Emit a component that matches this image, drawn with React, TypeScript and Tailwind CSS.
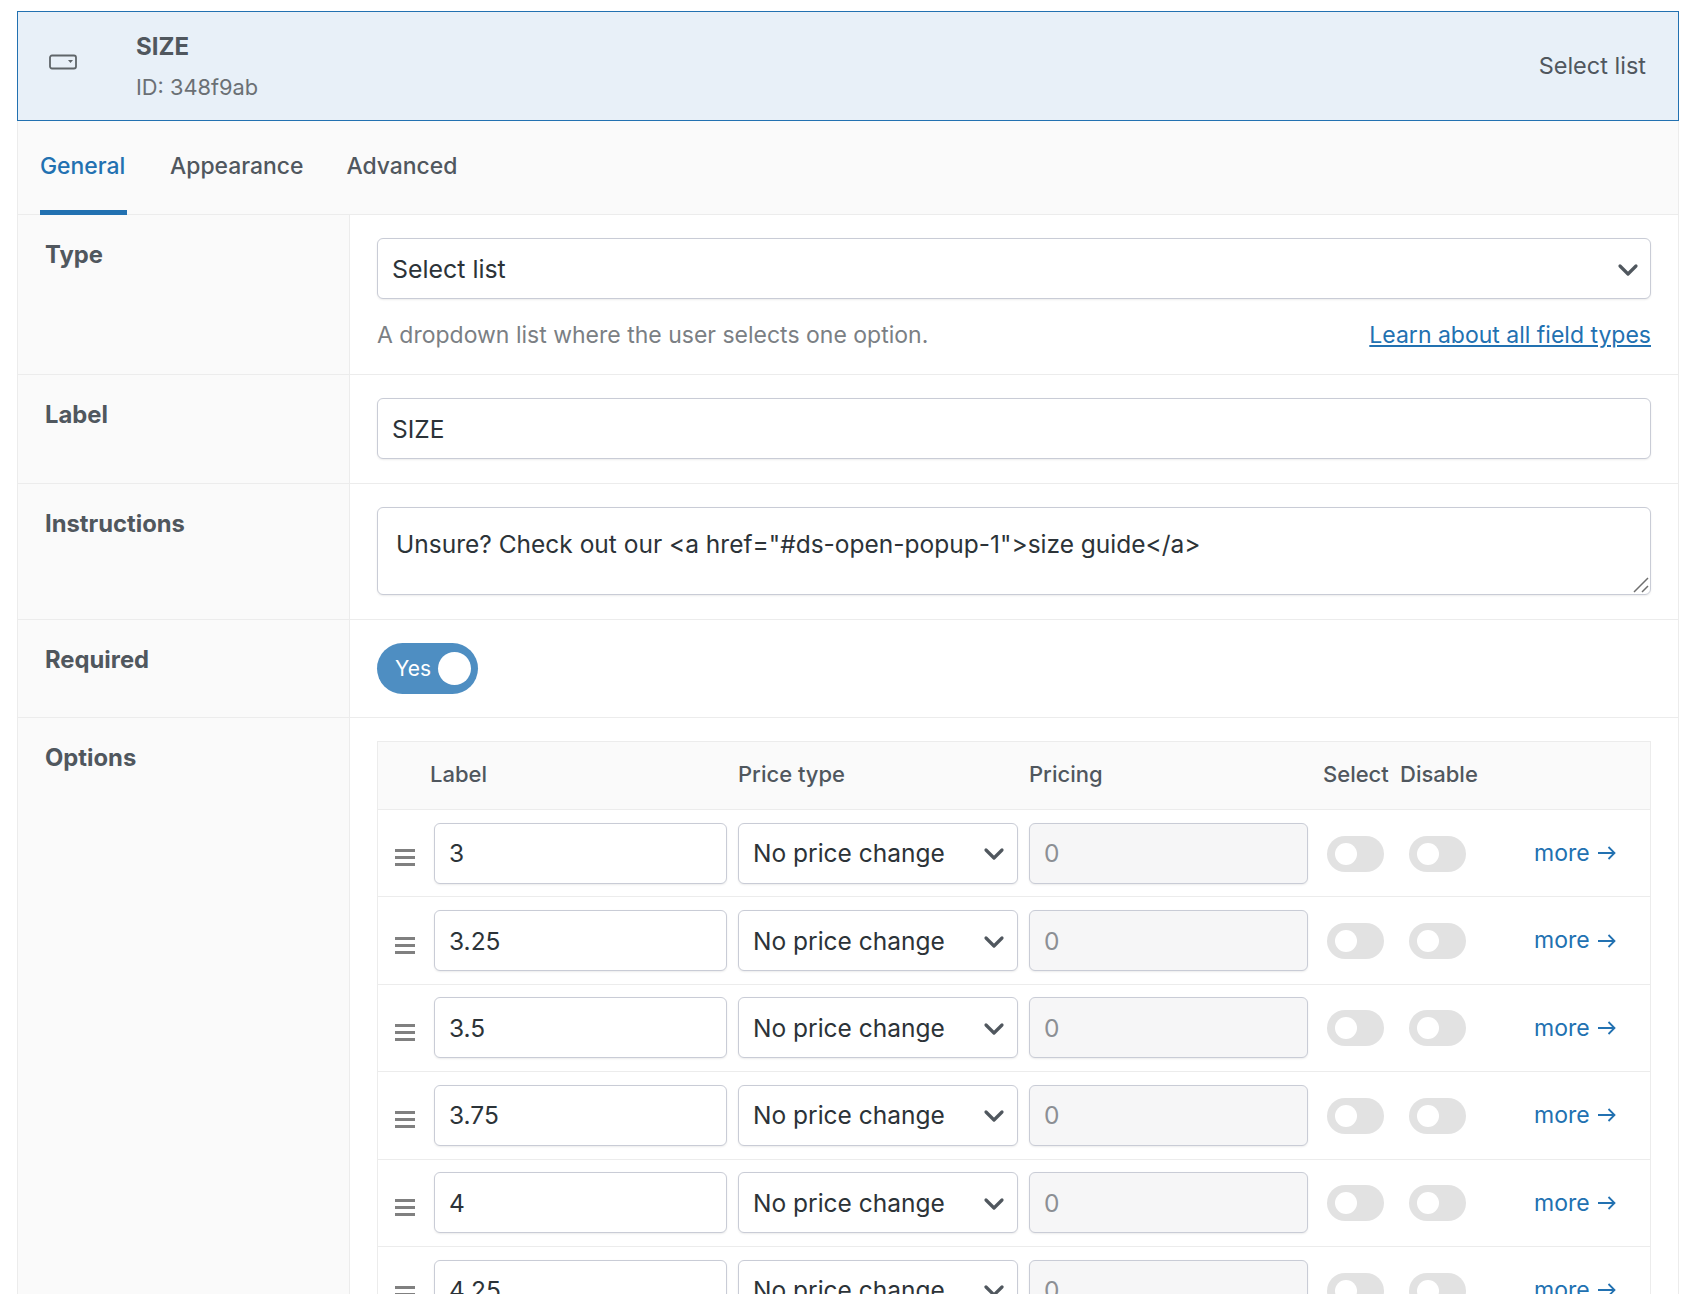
import React from 'react';
import { ChevronDown } from 'lucide-react';

const rows = ['3', '3.25', '3.5', '3.75', '4', '4.25'];

const inputCls =
  'flex items-center bg-white border border-[#c9ccd6] rounded-[6px] shadow-[0_1px_2px_rgba(0,0,0,0.08)] text-[#2c3338]';

const FieldRow: React.FC<{ label: string; className: string; children: React.ReactNode }> = ({ label, className, children }) => (
  <div className={`flex border-b border-[#ececec] ${className}`}>
    <div className="w-[332px] shrink-0 bg-[#fafafa] border-r border-[#ececec] pl-[27px] pt-[25px] text-[23.8px] leading-[30px] font-bold text-[#50575e]">
      {label}
    </div>
    <div className="flex-1 pl-[27px] pr-[27px] pt-[23px]">{children}</div>
  </div>
);

const MiniToggle: React.FC = () => (
  <div className="w-[57px] h-[36px] rounded-full bg-[#e2e2e2] flex items-center pl-[8px] shrink-0">
    <div className="w-[22px] h-[22px] rounded-full bg-white" />
  </div>
);

const OptionRow: React.FC<{ value: string }> = ({ value }) => (
  <div className="flex items-center h-[87.4px] shrink-0 border-b border-[#ececec] pl-[17px]">
    <svg width="20" height="18" viewBox="0 0 20 18" className="shrink-0 mt-[8px]">
      <rect x="0" y="1" width="20" height="3" fill="#808080" />
      <rect x="0" y="8" width="20" height="3" fill="#808080" />
      <rect x="0" y="15" width="20" height="3" fill="#808080" />
    </svg>
    <div className={`${inputCls} ml-[19px] w-[293px] h-[61px] pl-[14px] pt-[1px] text-[24.5px] shrink-0`}>{value}</div>
    <div className={`${inputCls} ml-[11px] w-[280px] h-[61px] pl-[14px] pr-[7px] text-[24.5px] justify-between shrink-0`}>
      <span className="pt-[1px]">No price change</span>
      <ChevronDown size={32} strokeWidth={2.4} className="text-[#50575e] mt-[2px]" />
    </div>
    <div className={`${inputCls} ml-[11px] w-[279px] h-[61px] pl-[14px] pt-[1px] text-[24.5px] !bg-[#f6f6f7] !text-[#8c8f94] shrink-0`}>0</div>
    <div className="ml-[19px] mt-[1px]"><MiniToggle /></div>
    <div className="ml-[25px] mt-[1px]"><MiniToggle /></div>
    <div className="ml-[68px] flex items-center gap-[8px] text-[23px] text-[#2271b1]">
      <span>more</span>
      <svg width="18" height="14" viewBox="0 0 18 14" fill="none" stroke="#2271b1" strokeWidth="1.8">
        <path d="M0 7h16.5M10.5 1l6 6-6 6" />
      </svg>
    </div>
  </div>
);

export default function App() {
  return (
    <div className="w-[1692px] h-[1294px] overflow-hidden bg-white pt-[11px] pl-[17px] font-['Inter','Liberation_Sans',sans-serif]">
      <div className="w-[1662px]">
        <div className="flex items-center h-[110px] bg-[#e8f0f8] border border-[#2271b1] text-[#50575e]">
          <svg width="30" height="16" viewBox="0 0 30 16" fill="none" className="ml-[31px] mb-[8px] shrink-0">
            <rect x="1" y="1.5" width="26" height="13" rx="2" stroke="#5f6569" strokeWidth="1.8" />
            <path d="M19 6h5l-2.5 3z" fill="#5f6569" />
          </svg>
          <div className="ml-[57px] flex-1">
            <div className="text-[24px] leading-[30px] font-bold mt-[1px]">SIZE</div>
            <div className="text-[21.8px] leading-[30px] mt-[10px] text-[#6b7075]">ID: 348f9ab</div>
          </div>
          <div className="pr-[32px] text-[23.5px]">Select list</div>
        </div>

        <div className="border-x border-[#ececec]">
          <div className="flex gap-[43px] h-[94px] bg-[#fafafa] border-b border-[#ececec] pl-[22px] text-[22.9px] font-medium text-[#50575e]">
            <div className="h-[94px] w-[87px] pt-[29px] text-[#2271b1] border-b-[5px] border-[#2271b1] leading-[32px]">General</div>
            <div className="pt-[29px] leading-[32px]">Appearance</div>
            <div className="pt-[29px] leading-[32px]">Advanced</div>
          </div>

          <FieldRow label="Type" className="h-[160px]">
            <div className={`${inputCls} h-[61px] pl-[14px] pr-[6px] text-[24.9px] justify-between`}>
              <span className="pt-[2px]">Select list</span>
              <ChevronDown size={32} strokeWidth={2.4} className="text-[#50575e] mt-[3px]" />
            </div>
            <div className="flex justify-between mt-[20px] text-[23px] leading-[32px]">
              <span className="text-[#7b7f84]">A dropdown list where the user selects one option.</span>
              <span className="text-[#2271b1] underline">Learn about all field types</span>
            </div>
          </FieldRow>

          <FieldRow label="Label" className="h-[109px]">
            <div className={`${inputCls} h-[61px] pl-[14px] pt-[2px] text-[24.5px]`}>SIZE</div>
          </FieldRow>

          <FieldRow label="Instructions" className="h-[136px]">
            <div className={`${inputCls} relative h-[88px] pl-[18px] pt-[20px] text-[24.5px] leading-[32px] !items-start`}>
              {'Unsure? Check out our <a href="#ds-open-popup-1">size guide</a>'}
              <svg width="16" height="16" viewBox="0 0 16 16" className="absolute right-[1px] bottom-[1px]">
                <path d="M1 15 15 1M9 15l6-6" stroke="#6f6f6f" strokeWidth="1.5" fill="none" />
              </svg>
            </div>
          </FieldRow>

          <FieldRow label="Required" className="h-[98px]">
            <div className="flex items-center w-[101px] h-[51px] rounded-full bg-[#4e8ec2] pl-[18px] text-[21px] text-white">
              <span>Yes</span>
              <div className="ml-auto mr-[7px] w-[33px] h-[33px] rounded-full bg-white" />
            </div>
          </FieldRow>

          <div className="flex">
            <div className="w-[332px] h-[600px] shrink-0 bg-[#fafafa] border-r border-[#ececec] pl-[27px] pt-[25px] text-[23.8px] leading-[30px] font-bold text-[#50575e]">
              Options
            </div>
            <div className="flex-1 pl-[27px] pr-[27px] pt-[23px]">
              <div className="border-x border-t border-[#ececec]">
                <div className="flex h-[68px] pb-[2px] items-center bg-[#fafafa] border-b border-[#ececec] text-[22px] font-medium text-[#50575e]">
                  <span className="ml-[52px] w-[308px]">Label</span>
                  <span className="w-[291px]">Price type</span>
                  <span className="w-[294px]">Pricing</span>
                  <span className="w-[77px]">Select</span>
                  <span>Disable</span>
                </div>
                {rows.map((r) => (
                  <OptionRow key={r} value={r} />
                ))}
              </div>
            </div>
          </div>
        </div>
      </div>
    </div>
  );
}
